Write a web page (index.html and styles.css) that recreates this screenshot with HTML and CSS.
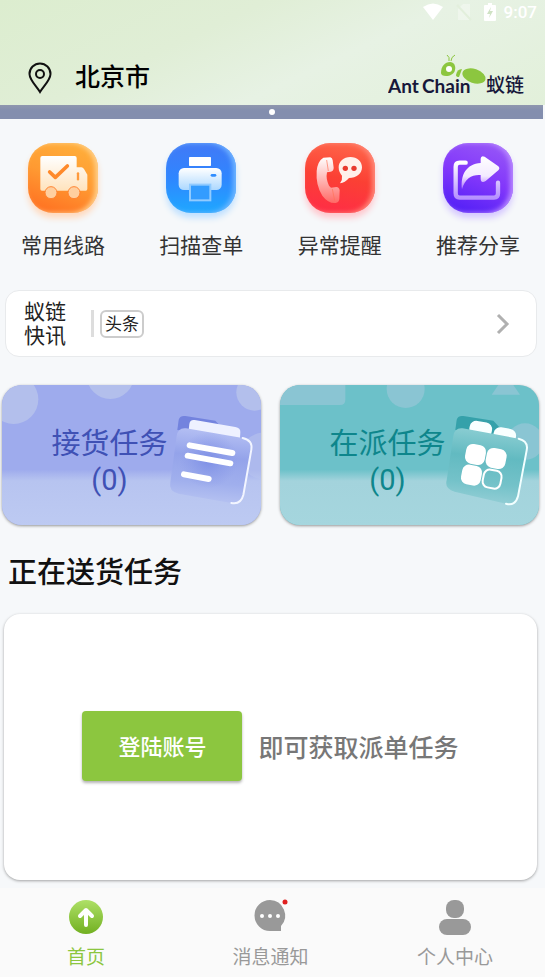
FILE: index.html
```html
<!DOCTYPE html>
<html lang="zh-CN">
<head>
    <meta charset="UTF-8">
    <meta name="viewport" content="width=device-width, initial-scale=1.0">
    <title>蚁链</title>
    <link rel="stylesheet" href="styles.css">
</head>
<body>

    <!-- HEADER -->
    <header class="header">
        <div class="status-bar">
            <svg width="22" height="18" viewBox="0 0 22 18" fill="#fff"><path d="M1 4Q11-3 21 4L11 17Z"/></svg>
            <svg width="16" height="18" viewBox="0 0 16 18" fill="#fff" opacity=".35"><path d="M7 1H14V17H2V6Z"/><path d="M1 2L15 17" stroke="#dcebd0" stroke-width="2"/></svg>
            <svg width="12" height="18" viewBox="0 0 12 18"><path d="M4 0H8V2H11Q12 2 12 3V17Q12 18 11 18H1Q0 18 0 17V3Q0 2 1 2H4Z" fill="#fff"/><path d="M7 4L3 11H6L5 15L9 8H6Z" fill="#cfe2c4"/></svg>
            <span>9:07</span>
        </div>
        <div class="header-row">
            <button class="city">
                <svg width="24" height="32" viewBox="0 0 24 32" fill="none" stroke="#111" stroke-width="2"><path d="M12 30C9 25 1.500 18 1.500 12A10.500 10.500 0 0 1 22.500 12C22.500 18 15 25 12 30Z"/><circle cx="12" cy="12" r="4"/></svg>
                <span>北京市</span>
            </button>
            <svg class="logo" width="138" height="46" viewBox="0 0 138 46">
                <g fill="#8cc63f">
                    <path d="M53 20C53 13 57 9 62 9C66 9 68 13 67 17C66 21 62 23 58 23C55 23 53 22 53 20Z"/>
                    <path d="M68 22Q69 16 74 16L71 24Q68 24 68 22Z"/>
                    <ellipse cx="86" cy="23" rx="12" ry="7" transform="rotate(18 86 23)"/>
                </g>
                <path d="M61 8Q62 4 59 2M63 8Q63 4 67 2" fill="none" stroke="#8cc63f" stroke-width="1"/>
                <circle cx="61" cy="16" r="3" fill="#fff"/>
                <text class="logo-en" x="0" y="40">Ant</text>
                <text class="logo-en" x="34" y="40">Chain</text>
                <text class="logo-cn" x="98" y="39">蚁链</text>
            </svg>
        </div>
    </header>

    <div class="banner"><span class="banner-dot"></span></div>

    <main class="content">

        <!-- SHORTCUTS -->
        <nav class="shortcuts">
            <a href="#lines" class="shortcut">
                <span class="tile tile-orange">
                    <svg viewBox="0 0 210 210">
                        <defs><linearGradient id="truck" x2="0" y2="1"><stop offset="0" stop-color="#fff"/><stop offset="1" stop-color="#ffe3bd"/></linearGradient></defs>
                        <path d="M43 39H140Q146 39 146 45V73H160Q165 73 168 78L178 95V138Q178 143 173 143H42Q37 143 37 138V45Q37 39 43 39Z" fill="url(#truck)"/>
                        <path d="M65 87L82 103L118 69" fill="none" stroke="#ff8a2b" stroke-width="11" stroke-linecap="round" stroke-linejoin="round"/>
                        <path d="M150 91V109" stroke="#ff9a3c" stroke-width="7" stroke-linecap="round"/>
                        <g fill="#ffcf9f" stroke="#ff8330" stroke-width="3"><circle cx="69" cy="149" r="18"/><circle cx="138" cy="149" r="18"/></g>
                    </svg>
                </span>
                <span>常用线路</span>
            </a>
            <a href="#scan" class="shortcut">
                <span class="tile tile-blue">
                    <svg viewBox="0 0 210 210">
                        <defs><linearGradient id="printer" x2="0" y2="1"><stop offset="0" stop-color="#fff"/><stop offset="1" stop-color="#acd8ff"/></linearGradient></defs>
                        <rect x="69" y="42" width="66" height="27" rx="2" fill="#fff"/>
                        <rect x="38" y="75" width="129" height="66" rx="16" fill="url(#printer)"/>
                        <path d="M138 97H147" stroke="#2f8dff" stroke-width="8" stroke-linecap="round"/>
                        <rect x="72" y="125" width="61" height="47" fill="#339cff" stroke="#91cbff" stroke-width="6"/>
                    </svg>
                </span>
                <span>扫描查单</span>
            </a>
            <a href="#alerts" class="shortcut">
                <span class="tile tile-red">
                    <svg viewBox="0 0 210 210">
                        <defs><linearGradient id="phone" x2="0" y2="1"><stop offset="0" stop-color="#fff"/><stop offset="1" stop-color="#ff6a66"/></linearGradient></defs>
                        <path d="M55 44L76 43Q82 44 83 52L86 74Q86 84 77 86L66 88Q62 108 72 128L78 134L94 132Q103 133 104 142L103 168Q102 178 92 180Q70 182 52 158Q32 128 35 84Q38 54 55 44Z" fill="url(#phone)"/>
                        <path d="M65 51L70 84M82 138L89 173" stroke="#ff7357" stroke-width="2"/>
                        <path d="M136 42C157 42 171 55 171 73C171 93 154 105 132 105Q120 119 105 121Q113 110 111 98Q101 87 101 73C101 55 116 42 136 42Z" fill="#fff0eb"/>
                        <g fill="#e8392f"><circle cx="121" cy="76" r="8"/><circle cx="147" cy="76" r="8"/></g>
                    </svg>
                </span>
                <span>异常提醒</span>
            </a>
            <a href="#share" class="shortcut">
                <span class="tile tile-purple">
                    <svg viewBox="0 0 210 210">
                        <defs>
                            <linearGradient id="share" x2="0" y2="1"><stop offset="0" stop-color="#fff"/><stop offset=".6" stop-color="#f3eaff"/><stop offset="1" stop-color="#a96bff"/></linearGradient>
                            <linearGradient id="frame" x2="0" y2="1"><stop offset="0" stop-color="#fff"/><stop offset="1" stop-color="#b691ff"/></linearGradient>
                        </defs>
                        <path d="M68 59H50Q38 59 38 71V151Q38 164 50 164H153Q165 164 165 151V119" fill="none" stroke="url(#frame)" stroke-width="13" stroke-linecap="round"/>
                        <path d="M57 139C52 95 70 63 113 60V47Q114 36 125 41L166 70Q172 76 166 82L128 114Q114 122 113 108V96C88 94 66 105 57 139Z" fill="url(#share)"/>
                    </svg>
                </span>
                <span>推荐分享</span>
            </a>
        </nav>

        <!-- NEWS -->
        <a href="#news" class="news">
            <span class="news-name">蚁链<br>快讯</span>
            <span class="news-line"></span>
            <span class="news-tag">头条</span>
            <svg class="news-arrow" width="14" height="22" viewBox="0 0 14 22" fill="none" stroke="#b0b0b0" stroke-width="3"><path d="M2 2L11 11L2 20"/></svg>
        </a>

        <!-- TASKS -->
        <div class="tasks">
            <a href="#pickup" class="task task-pickup">
                <svg class="task-art" viewBox="0 0 777 423" preserveAspectRatio="xMaxYMin slice">
                    <defs>
                        <linearGradient id="fadeBlue" x2="0" y2="1"><stop offset="0" stop-color="#b9c6f0" stop-opacity="0"/><stop offset=".2" stop-color="#b7c4f0"/><stop offset="1" stop-color="#bdcaf2"/></linearGradient>
                        <linearGradient id="glassBlue" x1=".3" y1="0" x2=".2" y2="1"><stop offset="0" stop-color="#b4bff3"/><stop offset=".35" stop-color="#94a3ea"/><stop offset=".7" stop-color="#a0afed"/><stop offset="1" stop-color="#b9c5f2"/></linearGradient>
                        <radialGradient id="glowBlue"><stop offset="0" stop-color="#7d8fe6"/><stop offset="1" stop-color="#8c9ce8" stop-opacity="0"/></radialGradient>
                    </defs>
                    <g fill="#b3bfec"><circle cx="35" cy="43" r="74"/><circle cx="325" cy="-29" r="71"/><circle cx="758" cy="22" r="55"/><circle cx="785" cy="213" r="70" opacity=".7"/></g>
                    <rect y="254" width="777" height="169" fill="url(#fadeBlue)"/>
                    <path d="M550 93L640 107L680 150L526 135L530 105Q533 91 550 93Z" fill="#7383de"/>
                    <path d="M578 105L700 126Q716 129 715 142L714 160L560 136L562 117Q564 103 578 105Z" fill="#eef1ff"/>
                    <path d="M552 130L722 159Q753 166 748 194L724 330Q716 360 688 354L530 326Q499 319 505 292L524 153Q528 127 552 130Z" fill="url(#glassBlue)"/>
                    <ellipse cx="620" cy="225" rx="88" ry="85" fill="url(#glowBlue)"/>
                    <path d="M722 159Q753 166 748 194L724 330Q716 360 688 354" fill="none" stroke="#f2f5ff" stroke-width="6" stroke-linecap="round"/>
                    <path d="M563 181L691 204M557 212L685 235M546 268L620 282" stroke="#fff" stroke-width="18" stroke-linecap="round"/>
                </svg>
                <span class="task-text">接货任务<br>(0)</span>
            </a>
            <a href="#delivering" class="task task-deliver">
                <svg class="task-art" viewBox="0 0 777 423" preserveAspectRatio="xMaxYMin slice">
                    <defs>
                        <linearGradient id="fadeTeal" x2="0" y2="1"><stop offset="0" stop-color="#a3d3dc" stop-opacity="0"/><stop offset=".2" stop-color="#a3d3dc"/><stop offset="1" stop-color="#a5d6de"/></linearGradient>
                        <linearGradient id="glassTeal" x1=".3" y1="0" x2=".2" y2="1"><stop offset="0" stop-color="#8acdd2"/><stop offset=".35" stop-color="#62bac1"/><stop offset=".7" stop-color="#74c2c9"/><stop offset="1" stop-color="#98d0d7"/></linearGradient>
                    </defs>
                    <g fill="#8ac5d3"><path d="M0 0H196V44Q196 60 180 60H0Z"/><circle cx="377" cy="12" r="57"/><path d="M655 0H700L720 29H635Z"/><circle cx="735" cy="170" r="55"/></g>
                    <rect y="254" width="777" height="169" fill="url(#fadeTeal)"/>
                    <path d="M550 93L640 107L680 150L526 135L530 105Q533 91 550 93Z" fill="#35a1aa"/>
                    <g fill="#f8ffff"><rect x="568" y="110" width="68" height="46" rx="20" transform="rotate(10 602 133)"/><rect x="640" y="129" width="68" height="46" rx="20" transform="rotate(10 674 152)"/></g>
                    <path d="M548 130L716 161Q746 168 740 196L714 334Q706 364 678 356L524 320Q493 312 500 286L520 153Q524 127 548 130Z" fill="url(#glassTeal)"/>
                    <path d="M716 161Q746 168 740 196L714 334Q706 364 678 356" fill="none" stroke="#f2ffff" stroke-width="6" stroke-linecap="round"/>
                    <g transform="rotate(11 612 245)" fill="#fff"><rect x="550" y="184" width="60" height="60" rx="20"/><rect x="613" y="184" width="60" height="60" rx="20"/><rect x="550" y="247" width="60" height="60" rx="20"/><rect x="616" y="250" width="54" height="54" rx="18" fill="none" stroke="#fff" stroke-width="6"/></g>
                </svg>
                <span class="task-text">在派任务<br>(0)</span>
            </a>
        </div>

        <h2>正在送货任务</h2>

        <section class="login-card">
            <button class="login-btn">登陆账号</button>
            <span class="login-tip">即可获取派单任务</span>
        </section>
    </main>

    <!-- TAB BAR -->
    <nav class="tabs">
        <a href="#home" class="tab active">
            <svg width="36" height="36" viewBox="0 0 36 36">
                <defs><linearGradient id="home" x2="0" y2="1"><stop offset="0" stop-color="#aee067"/><stop offset="1" stop-color="#72b021"/></linearGradient></defs>
                <circle cx="18" cy="18" r="17" fill="url(#home)"/>
                <path d="M18 26V12M12 17L18 11L24 17" fill="none" stroke="#fff" stroke-width="4" stroke-linecap="round" stroke-linejoin="round"/>
            </svg>
            <span>首页</span>
        </a>
        <a href="#messages" class="tab">
            <svg width="36" height="36" viewBox="0 0 36 36">
                <path d="M17 1A15.500 15.500 0 0 1 28 27V32H17A15.500 15.500 0 0 1 17 1Z" fill="#999"/>
                <g fill="#fff"><circle cx="9" cy="17" r="2"/><circle cx="17" cy="17" r="2"/><circle cx="25" cy="17" r="2"/></g>
                <circle cx="32" cy="3" r="2.500" fill="#e02020"/>
            </svg>
            <span>消息通知</span>
        </a>
        <a href="#me" class="tab">
            <svg width="36" height="36" viewBox="0 0 36 36" fill="#999"><rect x="9" y="1" width="18" height="18" rx="8"/><rect x="2" y="20" width="32" height="16" rx="8"/></svg>
            <span>个人中心</span>
        </a>
    </nav>

</body>
</html>
```
FILE: styles.css
```css
* {
    box-sizing: border-box;
}
body {
    font-family: Roboto, 'Noto Sans CJK SC', sans-serif;
    margin: 0;
    min-height: 100vh;
    display: flex;
    flex-direction: column;
    background: #f6f8fa;
    color: #333;
}
a {
    color: inherit;
    text-decoration: none;
}
button {
    font-family: inherit;
    border: none;
    cursor: pointer;
}
svg {
    display: block;
    flex: none;
}
.header {
    background: linear-gradient(155deg, #dcedcf 0%, #e0eed6 35%, #e7f2e4 60%, #e2f0da 100%);
}
.status-bar {
    display: flex;
    justify-content: flex-end;
    align-items: center;
    gap: 12px;
    height: 24px;
    padding-right: 8px;
    color: #fff;
    font-size: 17px;
    font-weight: 500;
}
.status-bar span {
    margin-left: -4px;
}
.header-row {
    display: flex;
    justify-content: space-between;
    align-items: center;
    height: 81px;
    padding: 22px 19px 0 28px;
}
.city {
    display: flex;
    align-items: center;
    gap: 23px;
    padding: 4px 0 0;
    background: none;
    color: #000;
    font-size: 25px;
    line-height: 32px;
    font-weight: 500;
}
.logo-en {
    font-family: Lato, sans-serif;
    font-size: 19px;
    font-weight: 700;
    fill: #17173a;
}
.logo-cn {
    font-size: 19px;
    font-weight: 500;
    fill: #17173a;
}
.banner {
    display: flex;
    justify-content: center;
    align-items: center;
    height: 14px;
    margin-right: 2px;
    background: linear-gradient(#8f97ae, #838eae 40%);
}
.banner-dot {
    width: 6px;
    height: 6px;
    border-radius: 50%;
    background: #fff;
}
.content {
    flex: 1;
    padding: 0 8px 8px 4px;
}
.shortcuts {
    display: flex;
    justify-content: space-between;
    padding: 24px 17px 0;
}
.shortcut {
    display: flex;
    flex-direction: column;
    align-items: center;
    gap: 17px;
    font-size: 21px;
    line-height: 32px;
}
.tile {
    width: 70px;
    height: 70px;
    border-radius: 25px;
}
.tile-orange {
    background: linear-gradient(20deg, #ff6a1f, #ff9a32 50%, #ffb23c);
    box-shadow: inset -3px 0 5px #ffd08c, 0 5px 6px #ffd9bd;
}
.tile-blue {
    background: linear-gradient(0deg, #1fa8ff, #2f86ff 50%, #4279f6);
    box-shadow: inset -3px 0 5px #72b7ff, 0 5px 6px #bfe0ff;
}
.tile-red {
    background: linear-gradient(10deg, #ff2b48, #fb4034 50%, #ff6a4d);
    box-shadow: inset -3px 0 5px #ff8a7a, 0 5px 6px #ffc6cc;
}
.tile-purple {
    background: linear-gradient(20deg, #4a1cf5, #8237fb 50%, #9a5cf6);
    box-shadow: inset -3px 0 5px #b98aff, 0 5px 6px #d5c8ff;
}
.news {
    display: flex;
    align-items: center;
    height: 67px;
    margin: 28px 0 0 1px;
    padding: 0 26px 0 18px;
    background: #fff;
    border: 1px solid #e8eaec;
    border-radius: 14px;
}
.news-name {
    font-size: 21px;
    line-height: 24px;
    color: #222;
}
.news-line {
    width: 3px;
    height: 27px;
    margin: 0 6px 0 25px;
    background: #ddd;
}
.news-tag {
    padding: 0 3px;
    border: 2px solid #ccc;
    border-radius: 6px;
    font-size: 17px;
    line-height: 24px;
    color: #222;
}
.news-arrow {
    margin-left: auto;
}
.tasks {
    display: grid;
    grid-template-columns: 1fr 1fr;
    gap: 19px;
    margin: 28px -2px 0;
}
.task {
    position: relative;
    display: flex;
    justify-content: center;
    align-items: center;
    height: 140px;
    padding: 14px 44px 0 0;
    border-radius: 20px;
    overflow: hidden;
    box-shadow: 0 1px 3px rgba(0, 0, 0, 0.4);
    text-align: center;
    font-size: 29px;
    line-height: 36px;
}
.task-pickup {
    background: #9eabed;
    color: #3f51b5;
}
.task-deliver {
    background: #6cc1c9;
    color: #0e868c;
}
.task-art {
    position: absolute;
    inset: 0;
    width: 100%;
    height: 100%;
}
.task-text {
    position: relative;
}
h2 {
    margin: 28px 4px 21px;
    font-size: 29px;
    line-height: 40px;
    font-weight: 500;
    color: #111;
}
.login-card {
    display: flex;
    justify-content: center;
    align-items: center;
    gap: 16px;
    height: 266px;
    padding-bottom: 2px;
    background: #fff;
    border-radius: 16px;
    box-shadow: 0 1px 3px rgba(0, 0, 0, 0.35);
}
.login-btn {
    width: 160px;
    height: 70px;
    padding-bottom: 4px;
    background: #8cc63f;
    color: #fff;
    border-radius: 4px;
    box-shadow: 0 2px 3px rgba(0, 0, 0, 0.3);
    font-size: 22px;
    font-weight: 500;
}
.login-tip {
    font-size: 25px;
    font-weight: 500;
    color: #777;
}
.tabs {
    display: flex;
    justify-content: space-between;
    padding: 11px 45px 5px 41px;
    background: #fafafa;
}
.tab {
    display: flex;
    flex-direction: column;
    align-items: center;
    gap: 9px;
    width: 90px;
    font-size: 19px;
    line-height: 28px;
    color: #999;
}
.tab.active {
    color: #8cc63f;
}
```
